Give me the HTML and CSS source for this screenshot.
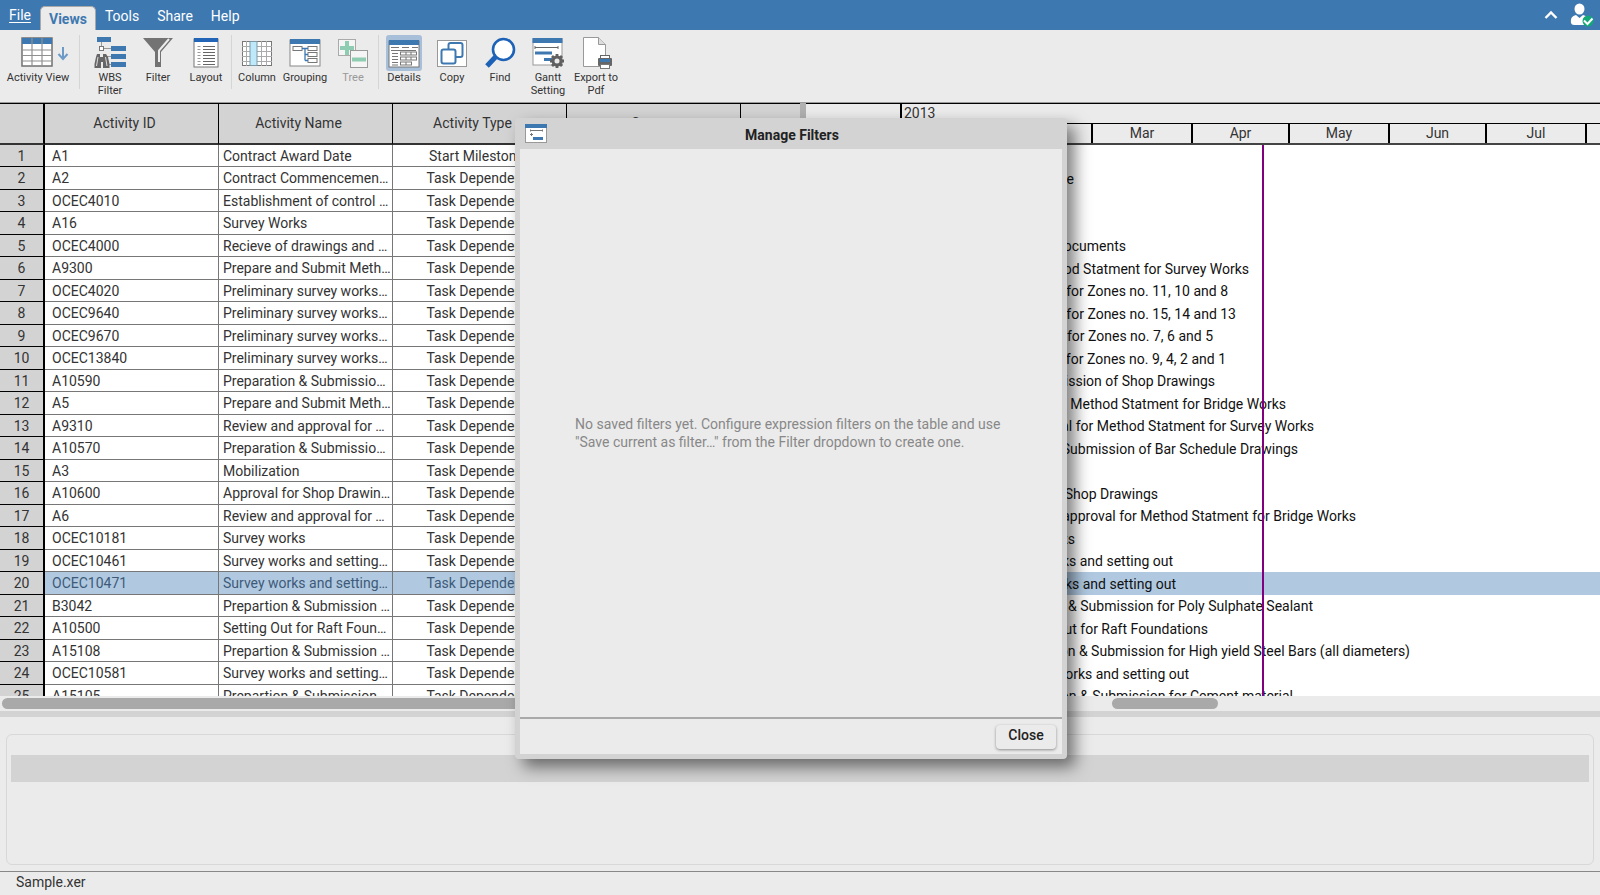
FILE: index.html
```
<!DOCTYPE html>
<html lang="en">
<head>
<meta charset="utf-8">
<title>Sample.xer</title>
<link rel="stylesheet" href="styles.css">
</head>
<body>
<div class="app">
  <header class="menubar">
    <nav class="menu">
      <button class="menu-item menu-file">File</button>
      <button class="menu-item menu-active">Views</button>
      <button class="menu-item">Tools</button>
      <button class="menu-item">Share</button>
      <button class="menu-item">Help</button>
    </nav>
    <div class="menu-right">
      <button class="icon-button" aria-label="Collapse ribbon">
        <svg width="14" height="10" viewBox="0 0 14 10"><path d="M1.5 8 7 2.500 12.500 8" fill="none" stroke="#fff" stroke-width="2.400"/></svg>
      </button>
      <button class="icon-button" aria-label="Account">
        <svg width="24" height="24" viewBox="0 0 24 24"><ellipse cx="9.500" cy="6" rx="5" ry="5.500" fill="#fff"/><path d="M1 20c-.5-5 1-7 5-8l3.500 3 3.500-3c4 1 5.500 3 5 8q-.5 2-3 2H4q-2.500 0-3-2Z" fill="#fff"/><circle cx="18" cy="18" r="5.500" fill="#12a877"/><path d="m14 17.500 3.500 3.500 5-5.500" fill="none" stroke="#fff" stroke-width="2"/></svg>
      </button>
    </div>
  </header>

  <div class="toolbar">
    <button class="tool tool-wide">
      <span class="tool-icon">
        <svg width="48" height="32" viewBox="0 0 48 32"><rect x="1" y="1" width="30" height="28" fill="#fff" stroke="#707070" stroke-width="1.500"/><rect x="1" y="1" width="30" height="6" fill="#3e78b0"/><path d="M1 13h30M1 18.500h30M1 24h30M11 1v28M21 1v28" stroke="#909090" stroke-width="1.200" fill="none"/><path d="M42 10v12M37.500 17l4.500 5 4.500-5" fill="none" stroke="#6c9bc8" stroke-width="2"/></svg>
      </span>
      <span class="tool-label">Activity View</span>
    </button>
    <span class="tool-sep tool-sep-wide"></span>
    <button class="tool">
      <span class="tool-icon">
        <svg width="34" height="32" viewBox="0 0 34 32"><rect x="4" y="0" width="14" height="5" fill="#3e78b0"/><g fill="#3e78b0"><rect x="18" y="9" width="15" height="5"/><rect x="18" y="17" width="15" height="5"/><rect x="18" y="25" width="15" height="5"/></g><path d="M8.500 5v4M11 11.500h7M12 19.500h6M13 27.500h5" stroke="#999" fill="none"/><rect x="6.500" y="9.500" width="4" height="4" fill="#fff" stroke="#777"/><path d="M4 17h3v3h3v-3h3l2 3 1.500 7v4H10v-6H8v6H1.500v-4L3 20Z" fill="#666"/><path d="M5 20 3.500 29M12.500 20l1.500 9" stroke="#ddd" fill="none"/></svg>
      </span>
      <span class="tool-label">WBS<br>Filter</span>
    </button>
    <button class="tool">
      <span class="tool-icon">
        <svg width="32" height="32" viewBox="0 0 32 32"><path d="M1 1h30L19 15v15h-6V15Z" fill="#737373"/><path d="M27 2 17 13.500V25" fill="none" stroke="#eee" stroke-width="2"/></svg>
      </span>
      <span class="tool-label">Filter</span>
    </button>
    <button class="tool">
      <span class="tool-icon">
        <svg width="26" height="32" viewBox="0 0 26 32"><rect x="1" y="2" width="24" height="28" fill="#fff" stroke="#777"/><rect x="1" y="1" width="24" height="4" fill="#2264b5"/><path d="M10 9.500h12M10 12.500h12M10 15.500h12M10 18.500h12M10 21.500h12M10 24.500h12M10 27.500h12" stroke="#666"/><path d="M4.500 9.500h3M4.500 12.500h3M4.500 15.500h3M4.500 18.500h3M4.500 21.500h3M4.500 24.500h3M4.500 27.500h3" stroke="#999"/></svg>
      </span>
      <span class="tool-label">Layout</span>
    </button>
    <span class="tool-sep"></span>
    <button class="tool">
      <span class="tool-icon">
        <svg width="32" height="32" viewBox="0 0 32 32"><rect x="1.500" y="4.500" width="29" height="24" fill="#fff" stroke="#777"/><path d="M1 9.500h30M1 14.500h30M1 19.500h30M1 24.500h30M5.500 4v25M20.500 4v25M25.500 4v25" stroke="#aaa"/><rect x="9" y="4.500" width="7" height="24" fill="#bee9fb" stroke="#7c99a8"/></svg>
      </span>
      <span class="tool-label">Column</span>
    </button>
    <button class="tool">
      <span class="tool-icon">
        <svg width="32" height="32" viewBox="0 0 32 32"><rect x="1" y="3" width="30" height="26" fill="#fff" stroke="#888"/><rect x="1" y="2" width="30" height="5" fill="#3e78b0"/><g fill="#fff" stroke="#777"><rect x="4" y="9.500" width="9" height="4"/><rect x="19" y="9.500" width="9" height="4"/><rect x="19" y="15.500" width="9" height="4"/><rect x="19" y="21.500" width="9" height="4"/></g><path d="M13 11.500h6M16 11.500v12M16 17.500h3M16 23.500h3" fill="none" stroke="#3e78b0" stroke-width="1.300"/></svg>
      </span>
      <span class="tool-label">Grouping</span>
    </button>
    <button class="tool tool-disabled" disabled>
      <span class="tool-icon">
        <svg width="32" height="32" viewBox="0 0 32 32"><rect x="1.500" y="2.500" width="17" height="16" fill="#f5f5f5" stroke="#aaa"/><path d="M10 4v14M3 11h14" stroke="#8ecdb1" stroke-width="4"/><rect x="13.500" y="13.500" width="17" height="17" fill="#f5f5f5" stroke="#999"/><path d="M15 22.500h14" stroke="#8ecdb1" stroke-width="4"/></svg>
      </span>
      <span class="tool-label">Tree</span>
    </button>
    <span class="tool-sep"></span>
    <button class="tool tool-on">
      <span class="tool-icon">
        <svg width="32" height="32" viewBox="0 0 32 32"><rect x="1" y="4" width="30" height="26" fill="#fff" stroke="#777"/><rect x="1" y="3" width="30" height="5" fill="#3e78b0"/><path d="M3 10.500h8M14 10.500h7M24 10.500h6M3 13.500h25M4 16.500h6M4 19.500h6M4 22.500h6M4 25.500h6M4 28h6" stroke="#777" fill="none"/><g fill="#fff" stroke="#777"><rect x="12.500" y="15" width="16" height="3"/><rect x="12.500" y="20" width="16" height="3"/><rect x="12.500" y="25" width="11" height="3"/></g><path d="M18 15v3M23 15v3M18 20v3M23 20v3M18 25v3" stroke="#777"/></svg>
      </span>
      <span class="tool-label">Details</span>
    </button>
    <button class="tool">
      <span class="tool-icon">
        <svg width="32" height="32" viewBox="0 0 32 32"><rect x="1.500" y="3.500" width="29" height="26" fill="#fff" stroke="#999"/><rect x="12.500" y="6" width="14" height="14" rx="2" fill="#fff" stroke="#3e78b0" stroke-width="2"/><rect x="5.500" y="12.500" width="14" height="14" rx="2" fill="#fff" stroke="#3e78b0" stroke-width="2"/></svg>
      </span>
      <span class="tool-label">Copy</span>
    </button>
    <button class="tool">
      <span class="tool-icon">
        <svg width="32" height="32" viewBox="0 0 32 32"><circle cx="19.500" cy="12.500" r="10.500" fill="#fff" stroke="#1d62b7" stroke-width="2.600"/><path d="m11.500 20-8.500 9" stroke="#1d62b7" stroke-width="5"/></svg>
      </span>
      <span class="tool-label">Find</span>
    </button>
    <button class="tool">
      <span class="tool-icon">
        <svg width="34" height="32" viewBox="0 0 34 32"><rect x="2" y="2" width="29" height="26" fill="#fff" stroke="#999"/><rect x="1.500" y="1" width="30" height="5" fill="#3e78b0"/><path d="M4 10.500h23M4 9v3M27 9v3" stroke="#666" fill="none"/><path d="M4 16h17M13 22.500h8" stroke="#3e78b0" stroke-width="3"/><circle cx="26" cy="24" r="4" fill="#ebebeb" stroke="#606060" stroke-width="3"/><path d="M26 17v3M26 28v3M19 24h3M30 24h3M21 19l2 2M29 27l2 2M31 19l-2 2M23 27l-2 2" stroke="#606060" stroke-width="2.800"/></svg>
      </span>
      <span class="tool-label">Gantt<br>Setting</span>
    </button>
    <button class="tool">
      <span class="tool-icon">
        <svg width="34" height="34" viewBox="0 0 34 34"><path d="M4.500 1.500h15l7 7v22h-22Z" fill="#fff" stroke="#999"/><path d="M19.500 1.500v7h7" fill="#ddd" stroke="#999"/><rect x="21.500" y="19.500" width="9" height="5" fill="#fff" stroke="#666"/><rect x="19" y="22" width="14" height="8" rx="1" fill="#666"/><rect x="21" y="23" width="10" height="3" fill="#3e78b0"/><rect x="21.500" y="28.500" width="9" height="4" fill="#fff" stroke="#777"/></svg>
      </span>
      <span class="tool-label">Export to<br>Pdf</span>
    </button>
  </div>

  <main class="workspace">
    <section class="grid-pane">
      <div class="grid-clip">
        <table class="grid">
          <thead>
            <tr><th class="col-num"></th><th>Activity ID</th><th>Activity Name</th><th>Activity Type</th><th>Start</th><th></th></tr>
          </thead>
          <tbody>
            <tr><th>1</th><td>A1</td><td>Contract Award Date</td><td>Start Milestone</td><td></td><td></td></tr>
            <tr><th>2</th><td>A2</td><td>Contract Commencement Date</td><td>Task Dependent</td><td></td><td></td></tr>
            <tr><th>3</th><td>OCEC4010</td><td>Establishment of control points</td><td>Task Dependent</td><td></td><td></td></tr>
            <tr><th>4</th><td>A16</td><td>Survey Works</td><td>Task Dependent</td><td></td><td></td></tr>
            <tr><th>5</th><td>OCEC4000</td><td>Recieve of drawings and documents</td><td>Task Dependent</td><td></td><td></td></tr>
            <tr><th>6</th><td>A9300</td><td>Prepare and Submit Method Statment for Survey Works</td><td>Task Dependent</td><td></td><td></td></tr>
            <tr><th>7</th><td>OCEC4020</td><td>Preliminary survey works for Zones no. 11, 10 and 8</td><td>Task Dependent</td><td></td><td></td></tr>
            <tr><th>8</th><td>OCEC9640</td><td>Preliminary survey works for Zones no. 15, 14 and 13</td><td>Task Dependent</td><td></td><td></td></tr>
            <tr><th>9</th><td>OCEC9670</td><td>Preliminary survey works for Zones no. 7, 6 and 5</td><td>Task Dependent</td><td></td><td></td></tr>
            <tr><th>10</th><td>OCEC13840</td><td>Preliminary survey works for Zones no. 9, 4, 2 and 1</td><td>Task Dependent</td><td></td><td></td></tr>
            <tr><th>11</th><td>A10590</td><td>Preparation &amp; Submission of Shop Drawings</td><td>Task Dependent</td><td></td><td></td></tr>
            <tr><th>12</th><td>A5</td><td>Prepare and Submit Method Statment for Bridge Works</td><td>Task Dependent</td><td></td><td></td></tr>
            <tr><th>13</th><td>A9310</td><td>Review and approval for Method Statment for Survey Works</td><td>Task Dependent</td><td></td><td></td></tr>
            <tr><th>14</th><td>A10570</td><td>Preparation &amp; Submission of Bar Schedule Drawings</td><td>Task Dependent</td><td></td><td></td></tr>
            <tr><th>15</th><td>A3</td><td>Mobilization</td><td>Task Dependent</td><td></td><td></td></tr>
            <tr><th>16</th><td>A10600</td><td>Approval for Shop Drawings</td><td>Task Dependent</td><td></td><td></td></tr>
            <tr><th>17</th><td>A6</td><td>Review and approval for Method Statment for Bridge Works</td><td>Task Dependent</td><td></td><td></td></tr>
            <tr><th>18</th><td>OCEC10181</td><td>Survey works</td><td>Task Dependent</td><td></td><td></td></tr>
            <tr><th>19</th><td>OCEC10461</td><td>Survey works and setting out</td><td>Task Dependent</td><td></td><td></td></tr>
            <tr class="selected"><th>20</th><td>OCEC10471</td><td>Survey works and setting out</td><td>Task Dependent</td><td></td><td></td></tr>
            <tr><th>21</th><td>B3042</td><td>Prepartion &amp; Submission for Poly Sulphate Sealant</td><td>Task Dependent</td><td></td><td></td></tr>
            <tr><th>22</th><td>A10500</td><td>Setting Out for Raft Foundations</td><td>Task Dependent</td><td></td><td></td></tr>
            <tr><th>23</th><td>A15108</td><td>Prepartion &amp; Submission for High yield Steel Bars (all diameters)</td><td>Task Dependent</td><td></td><td></td></tr>
            <tr><th>24</th><td>OCEC10581</td><td>Survey works and setting out</td><td>Task Dependent</td><td></td><td></td></tr>
            <tr><th>25</th><td>A15105</td><td>Prepartion &amp; Submission for Cement material</td><td>Task Dependent</td><td></td><td></td></tr>
          </tbody>
        </table>
      </div>
      <div class="scrollbar"><div class="thumb thumb-grid"></div></div>
    </section>
    <div class="split-v"></div>
    <section class="gantt-pane">
      <div class="gantt-clip">
        <div class="years"><div class="year-lead"></div><div class="year">2013</div></div>
        <div class="months">
          <div class="month-lead"></div><div class="month d31">Jan</div><div class="month d28">Feb</div><div class="month d31">Mar</div><div class="month d30">Apr</div><div class="month d31">May</div><div class="month d30">Jun</div><div class="month d31">Jul</div><div class="month d31"></div>
        </div>
        <div class="bars">
          <div class="bar"></div>
          <div class="bar"><span style="width:268px">Contract Commencement Date</span></div>
          <div class="bar"></div>
          <div class="bar"></div>
          <div class="bar"><span style="width:320px">Recieve of drawings and documents</span></div>
          <div class="bar"><span style="width:443px">Prepare and Submit Method Statment for Survey Works</span></div>
          <div class="bar"><span style="width:422px">Preliminary survey works for Zones no. 11, 10 and 8</span></div>
          <div class="bar"><span style="width:430px">Preliminary survey works for Zones no. 15, 14 and 13</span></div>
          <div class="bar"><span style="width:407px">Preliminary survey works for Zones no. 7, 6 and 5</span></div>
          <div class="bar"><span style="width:420px">Preliminary survey works for Zones no. 9, 4, 2 and 1</span></div>
          <div class="bar"><span style="width:409px">Preparation &amp; Submission of Shop Drawings</span></div>
          <div class="bar"><span style="width:480px">Prepare and Submit Method Statment for Bridge Works</span></div>
          <div class="bar"><span style="width:508px">Review and approval for Method Statment for Survey Works</span></div>
          <div class="bar"><span style="width:492px">Preparation &amp; Submission of Bar Schedule Drawings</span></div>
          <div class="bar"></div>
          <div class="bar"><span style="width:352px">Approval for Shop Drawings</span></div>
          <div class="bar"><span style="width:550px">Review and approval for Method Statment for Bridge Works</span></div>
          <div class="bar"><span style="width:269px">Survey works</span></div>
          <div class="bar"><span style="width:367px">Survey works and setting out</span></div>
          <div class="bar selected"><span style="width:370px">Survey works and setting out</span></div>
          <div class="bar"><span style="width:507px">Prepartion &amp; Submission for Poly Sulphate Sealant</span></div>
          <div class="bar"><span style="width:402px">Setting Out for Raft Foundations</span></div>
          <div class="bar"><span style="width:604px">Prepartion &amp; Submission for High yield Steel Bars (all diameters)</span></div>
          <div class="bar"><span style="width:383px">Survey works and setting out</span></div>
          <div class="bar"><span style="width:487px">Prepartion &amp; Submission for Cement material</span></div>
          <div class="data-date"></div>
        </div>
      </div>
      <div class="scrollbar"><div class="thumb thumb-gantt"></div></div>
    </section>
  </main>
  <div class="split-h"></div>
  <section class="details"><div class="details-box"><div class="details-head"></div></div></section>
  <footer class="status">Sample.xer</footer>
</div>

<div class="dialog" role="dialog" aria-labelledby="dialog-title">
  <div class="dialog-head">
    <svg width="22" height="19" viewBox="0 0 22 19"><rect x=".5" y=".5" width="21" height="18" fill="#fff" stroke="#999"/><rect width="22" height="4" fill="#3e78b0"/><path d="M5 6.500h13M5.500 5.500v2M17.500 5.500v2M5 10.500h3M6.500 9v3" stroke="#777" fill="none"/><path d="M8 14.500h10" stroke="#3e78b0" stroke-width="3"/></svg>
    <h2 id="dialog-title">Manage Filters</h2>
  </div>
  <div class="dialog-body"><p>No saved filters yet. Configure expression filters on the table and use "Save current as filter…" from the Filter dropdown to create one.</p></div>
  <div class="dialog-foot"><button class="close">Close</button></div>
</div>
</body>
</html>
```
FILE: styles.css
```
* { box-sizing: border-box; }
body { margin: 0; font-family: Roboto, "Liberation Sans", sans-serif; font-size: 14px; color: #333; background: #ebebeb; }
button { border: 0; background: none; padding: 0; font: inherit; color: inherit; }
svg { display: block; }

.app { display: flex; flex-direction: column; height: 100vh; overflow: hidden; }

/* Menu bar */
.menubar { display: flex; justify-content: space-between; height: 30px; flex: none; background: #3e78b0; color: #fff; }
.menu { display: flex; align-items: flex-end; padding-left: 9px; }
.menu-item { height: 28px; line-height: 28px; padding: 0 9px; }
.menu-file { height: 30px; padding-left: 0; text-decoration: underline; text-underline-offset: 2px; }
.menu-active { height: 24px; line-height: 24px; padding: 0 8px; background: #ebebeb; color: #3e78b0; font-weight: 700; border: 1px solid #a9a9a9; border-bottom: 0; border-radius: 5px 5px 0 0; }
.menu-right { display: flex; align-items: center; gap: 12px; padding-right: 6px; }

/* Toolbar */
.toolbar { display: flex; height: 73px; flex: none; padding: 5px 0 0 4px; border-bottom: 1px solid #999; }
.tool { display: flex; flex-direction: column; align-items: center; width: 48px; font-size: 11px; line-height: 13px; }
.tool-wide { width: 68px; }
.tool-icon { display: flex; justify-content: center; align-items: center; width: 36px; height: 36px; flex: none; }
.tool-wide .tool-icon { width: 62px; padding-left: 14px; }
.tool-on .tool-icon { background: #a7bfd8; border-radius: 3px; }
.tool-label { white-space: nowrap; }
.tool-disabled { color: #999; }
.tool-sep { width: 1px; height: 54px; margin: 0 1px; background: #d5d5d5; }
.tool-sep-wide { margin: 0 6px 0 7px; }

/* Workspace */
.workspace { display: flex; flex: 1; min-height: 0; }
.grid-pane { display: flex; flex-direction: column; flex: 1 1 50%; min-width: 0; }
.grid-clip { flex: 1; min-height: 0; overflow: hidden; background: #fff; }
.grid { table-layout: fixed; width: 915px; border-collapse: separate; border-spacing: 0; }
.grid th, .grid td { padding: 0 4px; font-weight: 400; line-height: 20px; white-space: nowrap; overflow: hidden; text-overflow: ellipsis; border-right: 1px solid #777; border-bottom: 1px solid #777; }
.grid thead th { height: 42px; padding: 0 18px 2px 4px; background: #d3d3d3; border-top: 1px solid #000; border-right: 1px solid #000; border-bottom: 2px solid #333; }
.grid thead .col-num { width: 45px; border-right: 2px solid #000; }
.grid tbody tr { height: 22px; }
.grid tbody tr:nth-child(even) { height: 23px; }
.grid tbody th { padding: 0; background: #d3d3d3; border-right: 2px solid #000; border-bottom-color: #000; }
.grid td:nth-child(2) { padding-left: 7px; }
.grid td:nth-child(3) { padding-right: 1px; }
.grid td:nth-child(4) { padding-right: 10px; text-align: center; }
.grid .selected td { background: #b0c9e1; color: #3e5a78; }

.scrollbar { height: 15px; flex: none; padding: 2px; }
.thumb { height: 11px; border-radius: 6px; background: #a9a9a9; }
.thumb-grid { width: 80%; }
.thumb-gantt { width: 106px; margin-left: 304px; }

.split-v { width: 6px; flex: none; background: #b0b0b0; }
.gantt-pane { display: flex; flex-direction: column; width: 794px; flex: 0 1 794px; min-width: 0; }
.gantt-clip { display: flex; flex-direction: column; flex: 1; min-height: 0; overflow: hidden; background: #fff; color: #111; }
.years { display: flex; height: 20px; flex: none; line-height: 19px; background: #ebebeb; border-top: 1px solid #000; color: #333; }
.year-lead { width: 94px; }
.year { flex: 1; padding-left: 2px; border-left: 2px solid #000; }
.months { display: flex; height: 22px; flex: none; line-height: 19px; overflow: hidden; background: #ebebeb; border-top: 1px solid #000; border-bottom: 2px solid #444; color: #333; text-align: center; }
.month-lead { width: 94px; flex: none; }
.month { flex: none; border-left: 2px solid #000; }
.d31 { width: 100px; }
.d30 { width: 97px; }
.d28 { width: 91px; }
.bars { position: relative; flex: 1; }
.bar { height: 22px; line-height: 22px; }
.bar:nth-child(even) { height: 23px; line-height: 24px; }
.bar span { display: flex; justify-content: flex-end; white-space: nowrap; }
.bar.selected { background: #b0c9e1; }
.data-date { position: absolute; top: 0; bottom: 0; left: 456px; width: 2px; background: #800080; }

/* Details */
.split-h { height: 6px; flex: none; background: #d3d3d3; }
.details { height: 154px; flex: none; padding: 17px 6px 6px; }
.details-box { height: 100%; padding: 20px 4px 0; border: 1px solid #d8d8d8; border-radius: 6px; }
.details-head { height: 27px; background: #d3d3d3; }
.status { height: 24px; flex: none; padding-left: 16px; line-height: 21px; border-top: 1px solid #888; }

/* Dialog */
.dialog { position: absolute; top: 118px; left: 515px; width: 552px; height: 641px; display: flex; flex-direction: column; padding: 0 5px 5px; background: #d3d3d3; border-radius: 4px; box-shadow: 8px 8px 16px rgba(0, 0, 0, .5); color: #222; }
.dialog-head { display: flex; align-items: center; height: 31px; flex: none; padding: 0 5px; }
.dialog-head h2 { flex: 1; margin: 0; padding: 2px 20px 0 0; font-size: 14px; font-weight: 700; text-align: center; }
.dialog-body { display: flex; flex: 1; align-items: center; padding: 0 55px; background: #ebebeb; color: #888; }
.dialog-body p { margin: 0; line-height: 18px; }
.dialog-foot { display: flex; justify-content: flex-end; align-items: flex-start; height: 37px; flex: none; padding: 6px 6px 0; background: #ebebeb; border-top: 2px solid #a9a9a9; }
.close { width: 60px; height: 24px; line-height: 20px; padding-bottom: 4px; border-radius: 4px; background: #ebebeb; font-weight: 500; box-shadow: 0 1px 3px rgba(0, 0, 0, .4); }
```
